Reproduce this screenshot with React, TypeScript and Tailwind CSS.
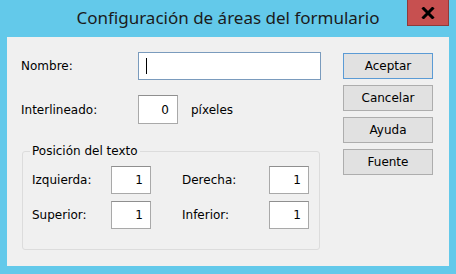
import React from 'react';

function Field({ value, width = 'w-[40px]', height = 'h-[28px]', pad = 'pr-[7px]' }: { value: string; width?: string; height?: string; pad?: string }) {
  return (
    <div className={`${width} ${height} ${pad} flex items-center justify-end bg-white border border-[#a9a9a9] border-t-[#8f8f8f] text-[12px] text-black`}>
      {value}
    </div>
  );
}

function Button({ label, primary = false }: { label: string; primary?: boolean }) {
  return (
    <div
      className={`w-[90px] h-[26px] flex items-center justify-center bg-[#e1e1e1] border text-[12px] text-black ${
        primary ? 'border-[#5b9bd5]' : 'border-[#adadad]'
      }`}
    >
      {label}
    </div>
  );
}

export default function App() {
  return (
    <div className="w-[456px] h-[274px] bg-[#63c9ea] flex flex-col font-['DejaVu_Sans',sans-serif] overflow-hidden">
      {/* Title bar */}
      <div className="h-[37px] flex px-[7px]">
        <div className="w-[42px]" />
        <div className="flex-1 flex items-center justify-center pb-[2px] text-[17px] text-[#1b1b1b] font-['Noto_Sans',sans-serif]">
          Configuración de áreas del formulario
        </div>
        <div className="w-[42px] h-[26px] bg-[#c75050] border border-[#8d3b3b] border-t-0 flex items-center justify-center">
          <svg width="14" height="12" viewBox="0 0 14 12">
            <path d="M1.5 0.5 L12.5 11.5 M12.5 0.5 L1.5 11.5" stroke="#000" strokeWidth="3" fill="none" />
          </svg>
        </div>
      </div>

      {/* Client area */}
      <div className="mx-[7px] h-[229px] bg-[#f0f0f0] flex text-[12px] text-black">
        <div className="w-[314px] pl-[14px] pt-[15px] flex flex-col">
          <div className="flex items-center h-[28px]">
            <span className="w-[117px]">Nombre:</span>
            <div className="w-[183px] h-[28px] bg-white border border-[#7a9bbd] flex items-center pl-[7px]">
              <div className="w-[1px] h-[16px] bg-black" />
            </div>
          </div>

          <div className="flex items-center h-[29px] mt-[15px]">
            <span className="w-[117px]">Interlineado:</span>
            <Field value="0" height="h-[29px]" pad="pr-[8px]" />
            <span className="ml-[13px]">píxeles</span>
          </div>

          <fieldset className="mt-[20px] ml-[1px] w-[298px] h-[106px] border border-[#dcdcdc] rounded-[3px] px-[7px]">
            <legend className="px-[2px] leading-[14px]">Posición del texto</legend>
            <div className="pl-[2px] pt-[8px] flex flex-col gap-[7px]">
              <div className="flex items-center h-[28px]">
                <span className="w-[79px]">Izquierda:</span>
                <Field value="1" />
                <span className="ml-[31px] w-[87px]">Derecha:</span>
                <Field value="1" />
              </div>
              <div className="flex items-center h-[28px]">
                <span className="w-[79px]">Superior:</span>
                <Field value="1" />
                <span className="ml-[31px] w-[87px]">Inferior:</span>
                <Field value="1" />
              </div>
            </div>
          </fieldset>
        </div>

        <div className="ml-[22px] pt-[16px] flex flex-col gap-[6px]">
          <Button label="Aceptar" primary />
          <Button label="Cancelar" />
          <Button label="Ayuda" />
          <Button label="Fuente" />
        </div>
      </div>
    </div>
  );
}
